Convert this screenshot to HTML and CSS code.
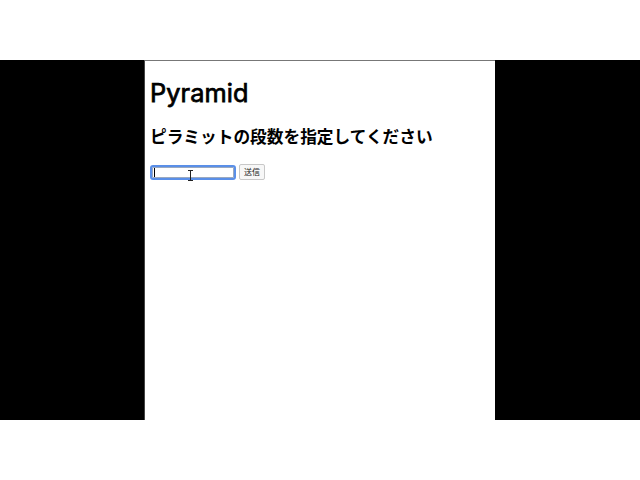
FILE: index.html
```html
<!DOCTYPE html>
<html lang="ja">
<head>
<meta charset="utf-8">
<title>Pyramid</title>
<link rel="stylesheet" href="styles.css">
</head>
<body>
<div class="stage">
  <main class="page">
    <h1 class="title">Pyramid</h1>
    <h2 class="subtitle">ピラミットの段数を指定してください</h2>
    <form class="form">
      <div class="field">
        <span class="caret"></span>
        <svg class="ibeam" width="7" height="11" viewBox="0 0 7 11"><path d="M1 0.5h5M1 10.5h5M3.5 0.5v10" stroke="#222" stroke-width="1" fill="none"/></svg>
      </div>
      <button class="submit" type="button">送信</button>
    </form>
  </main>
</div>
</body>
</html>
```
FILE: styles.css
```css
html, body {
  margin: 0;
  padding: 0;
  background: #fff;
}
.stage {
  margin-top: 60px;
  height: 360px;
  background: #000;
  display: flex;
}
.page {
  width: 345px;
  margin-left: 144px;
  background: #fff;
  border-left: 1px solid #444;
  border-top: 1px solid #777;
  padding: 0 0 0 5px;
  box-sizing: content-box;
  font-family: "Noto Sans CJK JP", "Noto Sans", sans-serif;
  color: #000;
}
.title {
  margin: 17px 0 0 0;
  font-family: Inter, "Noto Sans", sans-serif;
  font-size: 25.3px;
  font-weight: 400;
  -webkit-text-stroke: 0.75px #000;
  line-height: 30px;
  letter-spacing: 0.1px;
}
.subtitle {
  margin: 17px 0 0 0;
  font-size: 16.7px;
  font-weight: 700;
  line-height: 22px;
}
.form {
  display: flex;
  align-items: center;
  gap: 3px;
  margin-top: 17px;
}
.field {
  position: relative;
  width: 82px;
  height: 11px;
  border: 2px solid #5a8fe8;
  border-radius: 3px;
  box-shadow: inset 0 0 0 1px #9aa9c0;
}
.caret {
  position: absolute;
  left: 2px;
  top: 1px;
  width: 1px;
  height: 9px;
  background: #000;
}
.ibeam {
  position: absolute;
  left: 35px;
  top: 3px;
}
.submit {
  height: 16px;
  padding: 0 4px;
  border: 1px solid #c8c8c8;
  border-radius: 2px;
  background: #f7f7f7;
  font-family: "Noto Sans CJK JP", sans-serif;
  font-size: 8px;
  line-height: 14px;
  color: #222;
}
```
